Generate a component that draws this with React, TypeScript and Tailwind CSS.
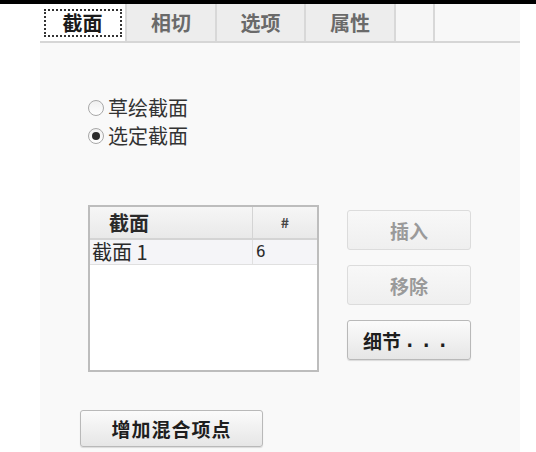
import React from "react";

const cjk = { fontFamily: '"Noto Sans CJK SC", "Noto Sans", sans-serif' };

function Btn({ children, disabled, className = "" }: { children: React.ReactNode; disabled?: boolean; className?: string }) {
  return (
    <div
      className={
        "flex items-center justify-center rounded-[3px] border font-bold text-[19px] leading-none " +
        (disabled
          ? "border-[#dcdcdc] bg-gradient-to-b from-[#f8f8f8] to-[#efefef] text-[#9a9a9a]"
          : "border-[#b9b9b9] bg-gradient-to-b from-[#fbfbfb] to-[#e6e6e6] text-[#1e1e1e] shadow-[0_1px_1px_rgba(0,0,0,0.12)]") +
        " " +
        className
      }
    >
      {children}
    </div>
  );
}

function Radio({ checked, label }: { checked?: boolean; label: string }) {
  return (
    <div className="flex items-center h-[28px]">
      <div className="w-[16px] h-[16px] rounded-full border border-[#a8a8a8] bg-gradient-to-b from-[#f0f0f0] to-white flex items-center justify-center">
        {checked && <div className="w-[8px] h-[8px] rounded-full bg-[#2a2a2a]" />}
      </div>
      <span className="ml-[4px] text-[20px] text-[#333] leading-none">{label}</span>
    </div>
  );
}

export default function App() {
  return (
    <div className="w-[536px] h-[452px] bg-white flex flex-col overflow-hidden" style={cjk}>
      <div className="h-[4px] bg-black shrink-0" />
      <div className="flex flex-1">
        <div className="w-[40px] bg-white" />
        <div className="w-[480px] bg-[#f9f9f9] flex flex-col">
          {/* tabs */}
          <div className="flex h-[39px] border-b-2 border-[#d6d6d6]">
            <div className="w-[87px] bg-white border-r-2 border-[#d8d8d8] flex items-center justify-center">
              <div className="w-[78px] h-[28px] border-2 border-dotted border-[#333] flex items-center justify-center text-[20px] font-bold text-[#1a1a1a]">
                截面
              </div>
            </div>
            <div className="w-[90px] bg-[#ededed] border-r-2 border-[#d8d8d8] flex items-center justify-center text-[20px] font-bold text-[#6a6a6a]">
              相切
            </div>
            <div className="w-[89px] bg-[#ededed] border-r-2 border-[#d8d8d8] flex items-center justify-center text-[20px] font-bold text-[#6a6a6a]">
              选项
            </div>
            <div className="w-[90px] bg-[#ededed] border-r-2 border-[#d8d8d8] flex items-center justify-center text-[20px] font-bold text-[#6a6a6a]">
              属性
            </div>
            <div className="w-[39px] bg-[#f6f6f6] border-r-2 border-[#d8d8d8]" />
            <div className="flex-1 bg-[#f8f8f8]" />
          </div>

          {/* radios */}
          <div className="pl-[48px] pt-[51px] flex flex-col">
            <Radio label="草绘截面" />
            <Radio checked label="选定截面" />
          </div>

          {/* table + buttons */}
          <div className="flex pl-[48px] mt-[55px]">
            <div className="w-[231px] h-[167px] border-2 border-[#bdbdbd] bg-white flex flex-col">
              <div className="flex h-[33px] bg-gradient-to-b from-[#f6f6f6] to-[#e9e9e9] border-b-2 border-[#d4d4d4]">
                <div className="w-[163px] border-r border-[#d4d4d4] flex items-center pl-[19px] text-[20px] font-bold text-[#2a2a2a]">
                  截面
                </div>
                <div className="flex-1 flex items-center justify-center text-[14px] font-bold text-[#444]">#</div>
              </div>
              <div className="flex h-[25px] bg-[#f5f5f8] border-b border-[#e0e0e0]">
                <div className="w-[163px] border-r border-[#e0e0e0] flex items-center pl-[2px] text-[20px] text-[#2a2a2a] leading-none">
                  截面 1
                </div>
                <div className="flex-1 flex items-center pl-[3px] text-[16px] text-[#2a2a2a]" style={{ fontFamily: '"DejaVu Sans Mono", monospace' }}>
                  6
                </div>
              </div>
            </div>
            <div className="ml-[28px] flex flex-col gap-[15px] pt-[5px]">
              <Btn disabled className="w-[124px] h-[40px]">插入</Btn>
              <Btn disabled className="w-[124px] h-[40px]">移除</Btn>
              <Btn className="w-[124px] h-[40px] justify-start pl-[15px]">
                细节<span className="tracking-[5px] ml-[3px]" style={{ fontFamily: '"DejaVu Sans Mono", monospace' }}>...</span>
              </Btn>
            </div>
          </div>

          <div className="pl-[40px] mt-[38px]">
            <Btn className="w-[183px] h-[37px] tracking-[1px]">增加混合项点</Btn>
          </div>
        </div>
      </div>
    </div>
  );
}
